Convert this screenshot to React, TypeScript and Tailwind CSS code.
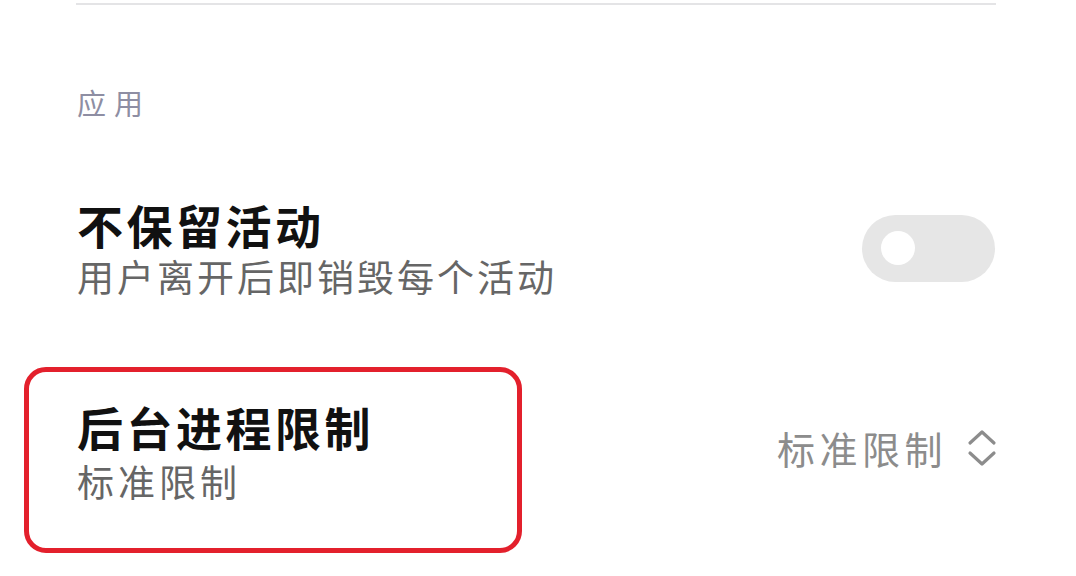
import React from 'react'

const font = { fontFamily: '"Noto Sans CJK SC", "Noto Sans", sans-serif' }

function Toggle() {
  return (
    <div className="w-[133px] h-[67px] rounded-full bg-[#e6e6e6] flex items-center pl-[19px]">
      <div className="w-[34px] h-[34px] rounded-full bg-white" />
    </div>
  )
}

function UpDown() {
  return (
    <svg width="30" height="38" viewBox="0 0 30 38" fill="none" stroke="#8c8c8c" strokeWidth="3.2" strokeLinecap="round" strokeLinejoin="round">
      <path d="M3 14 L15 3 L27 14" />
      <path d="M3 24 L15 35 L27 24" />
    </svg>
  )
}

export default function App() {
  return (
    <div className="w-[1076px] h-[576px] bg-white overflow-hidden" style={font}>
      <div className="mt-[3px] ml-[76px] w-[920px] h-[2px] bg-[#e4e4e6]" />

      <div className="mt-[83px] ml-[77px] text-[29px] leading-none tracking-[8px] text-[#8e8ea3]">应用</div>

      <div className="mt-[84px] ml-[77px] mr-[81px] flex items-center justify-between">
        <div className="flex flex-col">
          <div className="text-[46px] leading-none font-bold tracking-[3.5px] text-[#111]">不保留活动</div>
          <div className="mt-[11px] text-[37px] leading-none tracking-[3px] text-[#666]">用户离开后即销毁每个活动</div>
        </div>
        <Toggle />
      </div>

      <div className="mt-[72px] ml-[24px] mr-[79px] flex justify-between">
        <div className="w-[498px] h-[186px] border-[5px] border-[#e3202c] rounded-[22px] pl-[48px] pt-[31px] flex flex-col">
          <div className="text-[46px] leading-none font-bold tracking-[3.5px] text-[#111]">后台进程限制</div>
          <div className="mt-[14px] text-[37px] leading-none tracking-[4px] text-[#666]">标准限制</div>
        </div>
        <div className="mt-[62px] self-start flex items-center gap-[20px]">
          <span className="text-[38px] leading-none tracking-[4.5px] text-[#8c8c8c]">标准限制</span>
          <UpDown />
        </div>
      </div>
    </div>
  )
}
